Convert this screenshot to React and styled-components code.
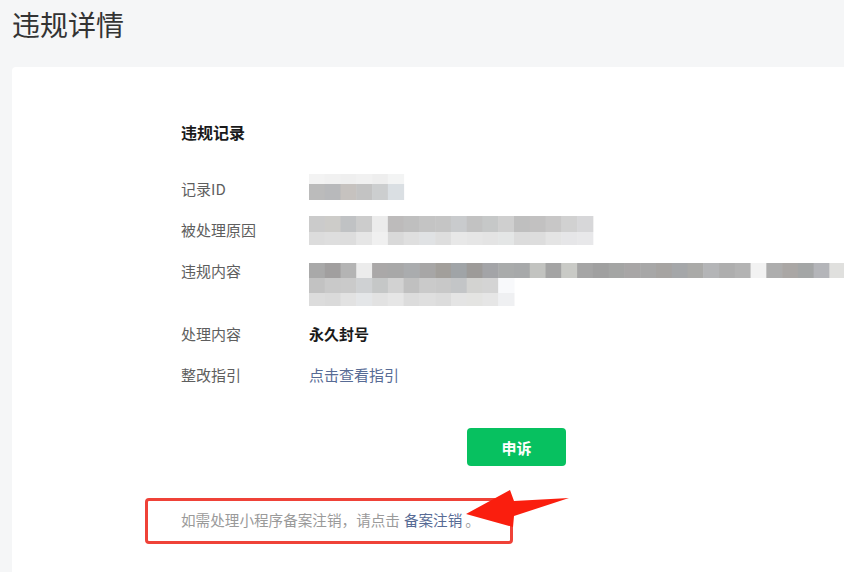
import React from "react";
import styled, { createGlobalStyle } from "styled-components";

const GlobalStyle = createGlobalStyle`
  html, body {
    margin: 0;
    padding: 0;
    background: #f5f6f7;
    overflow: hidden;
  }
  body {
    font-family: "Noto Sans CJK SC", "Liberation Sans", sans-serif;
    color: #333;
  }
`;

const Page = styled.div`
  width: 844px;
  height: 572px;
  overflow: hidden;
`;

const PageTitle = styled.h1`
  margin: 0;
  height: 67px;
  padding: 10px 0 0 12px;
  box-sizing: border-box;
  font-size: 28px;
  line-height: 28px;
  font-weight: 400;
  color: #333;
`;

const Card = styled.div`
  margin-left: 12px;
  min-height: 520px;
  padding: 54px 0 0 169px;
  background: #fff;
  border-radius: 4px 0 0 0;
`;

const SectionTitle = styled.h2`
  margin: 0;
  font-size: 16px;
  line-height: 22px;
  font-weight: 700;
  color: #1a1a1a;
`;

const InfoList = styled.div`
  display: grid;
  grid-template-columns: 128px 1fr;
  row-gap: 19px;
  margin-top: 35px;
  align-items: start;
`;

const Label = styled.div`
  font-size: 15px;
  line-height: 22px;
  color: #5e5e5e;
`;

const Value = styled.div`
  font-size: 15px;
  line-height: 22px;
  color: ${(p) => (p.$link ? "#576b95" : "#1a1a1a")};
  font-weight: ${(p) => (p.$strong ? 700 : 400)};
`;

const MosaicBox = styled.svg`
  display: block;
  margin-top: ${(p) => p.$top}px;
  margin-bottom: ${(p) => p.$bottom}px;
  overflow: visible;
`;

const Actions = styled.div`
  margin-top: 42px;
  padding-left: 286px;
`;

const PrimaryButton = styled.button`
  width: 99px;
  height: 38px;
  border: 0;
  border-radius: 4px;
  background: #07c160;
  color: #fff;
  font-family: inherit;
  font-size: 15px;
  font-weight: 700;
  cursor: pointer;
`;

const Notice = styled.div`
  position: relative;
  margin-top: 44px;
  font-size: 14.6px;
  line-height: 20px;
  color: #9a9a9a;
`;

const NoticeLink = styled.a`
  margin: 0 3px 0 4px;
  color: #576b95;
  text-decoration: none;
  cursor: pointer;
`;

const MarkBox = styled.div`
  position: absolute;
  left: -36px;
  top: -12px;
  width: 368px;
  height: 46px;
  box-sizing: border-box;
  border: 3px solid #ef4238;
  border-radius: 4px;
  pointer-events: none;
`;

const MarkArrow = styled.svg`
  position: absolute;
  left: 280px;
  top: -26px;
  pointer-events: none;
`;

const CELL = 15.77;

const idRows = [
  { h: 10, c: ["#f3f3f3", "#f1f1f1", "#efefef", "#f1f1f1", "#eeeeee", "#f3f4f4"] },
  { h: 16, c: ["#bbbbbb", "#b8b9bb", "#c6c2bf", "#c3c3c3", "#cccecf", "#dadfe3"] },
];

const reasonRows = [
  {
    h: 16,
    c: ["#cbcbcb", "#cdccc9", "#c0c2c4", "#cccccc", "#ececec", "#bdbbbb", "#bfbfbf", "#c4c4c4", "#c5c5c5",
      "#c9cbcd", "#c2c2c2", "#c6c8c8", "#cfcfcf", "#bfbfbf", "#c2c1c1", "#c8c7c7", "#d1d1d1", "#d7d7d9"],
  },
  {
    h: 13,
    c: ["#dcdcdc", "#dedede", "#dddddd", "#e6e6e6", "#f0f0f0", "#d9d9d9", "#dfdfdf", "#e0e2e4", "#dedede",
      "#e8e8e8", "#e6e6e6", "#e4e4e4", "#e4e6e6", "#dcdcdc", "#dddddd", "#e4e4e4", "#e6e6e8", "#e8e8ea"],
  },
];

const contentRows = [
  {
    h: 15,
    c: ["#a9a9a9", "#a19f9f", "#b4b4b4", "#ececec", "#aaa8a8", "#a8a8a8", "#aaacae", "#a7a6a6", "#a29f9b",
      "#a0a4a7", "#9d9b99", "#a3a4a7", "#a9abab", "#a7a9aa", "#c2c3c0", "#a4a4a4", "#c9cac6", "#a5a5a5",
      "#a0a0a0", "#a4a5a4", "#a8a6a6", "#a7a7a7", "#a6a4a2", "#a5a7a9", "#aaaaa8", "#b4b5b7", "#aeaeae",
      "#b3b3b3", "#f2f2f2", "#adadad", "#aaa7a5", "#a4a6a6", "#b4b5b9", "#e0e0de", "#e0e0de"],
  },
  {
    h: 15,
    c: ["#c2c2c2", "#c9c9c9", "#cacaca", "#cfd1d3", "#c5c7c7", "#d2d2d2", "#c0c0c0", "#cacaca", "#c8c8c8",
      "#c3c5c7", "#d3d3d1", "#d4d4d4", "#f8f9fb"],
  },
  {
    h: 13,
    c: ["#dcdcdc", "#dadada", "#e2e2e2", "#e4e6e8", "#e2e2e2", "#e6e6e6", "#dcdcdc", "#dfdfdf", "#dcdcdc",
      "#e4e4e4", "#e4e4e2", "#e6e6e6", "#eff0f2"],
  },
];

// 打码区域：按行画色块
function Mosaic({ rows, top = 0, bottom = 0 }) {
  const width = Math.max(...rows.map((r) => r.c.length)) * CELL;
  const height = rows.reduce((s, r) => s + r.h, 0);
  let y = 0;
  return (
    <MosaicBox width={Math.ceil(width)} height={height} $top={top} $bottom={bottom}>
      {rows.map((r, ri) => {
        const rowY = y;
        y += r.h;
        return r.c.map((color, i) => (
          <rect key={ri + "-" + i} x={i * CELL} y={rowY} width={CELL + 0.5} height={r.h} fill={color} />
        ));
      })}
    </MosaicBox>
  );
}

export default function App() {
  return (
    <Page>
      <GlobalStyle />
      <PageTitle>违规详情</PageTitle>
      <Card>
        <SectionTitle>违规记录</SectionTitle>
        <InfoList>
          <Label>记录ID</Label>
          <Mosaic rows={idRows} top={-4} />
          <Label>被处理原因</Label>
          <Mosaic rows={reasonRows} top={-3} bottom={-4} />
          <Label>违规内容</Label>
          <Mosaic rows={contentRows} top={3} bottom={-2} />
          <Label>处理内容</Label>
          <Value $strong>永久封号</Value>
          <Label>整改指引</Label>
          <Value $link>点击查看指引</Value>
        </InfoList>
        <Actions>
          <PrimaryButton>申诉</PrimaryButton>
        </Actions>
        <Notice>
          如需处理小程序备案注销，请点击<NoticeLink>备案注销</NoticeLink>。
          <MarkBox />
          <MarkArrow width="112" height="48" viewBox="0 0 112 48">
            <polygon points="5,30 49,6 53,17 108,14 53,32 52,43" fill="#fa1e0e" />
          </MarkArrow>
        </Notice>
      </Card>
    </Page>
  );
}
